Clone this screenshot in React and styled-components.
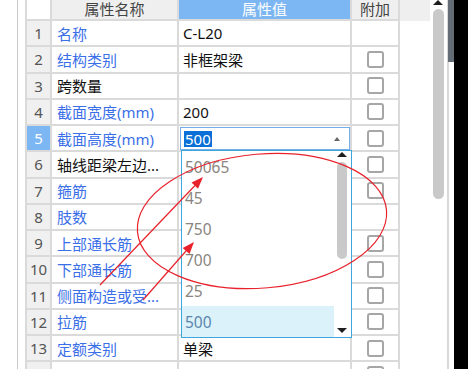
import React from "react";
import styled, { createGlobalStyle } from "styled-components";

const GlobalStyle = createGlobalStyle`
  html, body {
    margin: 0;
    padding: 0;
    background: #fff;
    overflow: hidden;
  }
  body {
    font-family: "Noto Sans", "Noto Sans CJK SC", sans-serif;
  }
`;

// colours
const LINE = "#dadada";
const HEAD_BLUE = "#7db7f3";
const NAME_BLUE = "#3b6fe8";

const Page = styled.div`
  position: relative;
  display: flex;
  width: 468px;
  height: 369px;
  overflow: hidden;
  background: #fff;
`;

const Gutter = styled.div`
  width: 17px;
  flex: none;
  border-right: 1px solid #c8c8c8;
`;

const Sheet = styled.div`
  flex: none;
  padding-left: 7px;
`;

const Grid = styled.div`
  display: grid;
  grid-template-columns: 27px 127px 173px 48px 30px;
  grid-template-rows: 21px;
  grid-auto-rows: 26.25px;
  font-size: 15px;
`;

const HeadCell = styled.div`
  box-sizing: border-box;
  display: flex;
  align-items: center;
  justify-content: center;
  background: ${(p) => (p.$blue ? HEAD_BLUE : p.$blank ? "#fff" : "#efefef")};
  color: ${(p) => (p.$blue ? "#fff" : "#444")};
  border-bottom: 2px solid ${LINE};
  border-right: ${(p) => (p.$last ? "none" : `2px solid ${LINE}`)};
  border-left: ${(p) => (p.$first ? `2px solid ${LINE}` : "none")};
  border-bottom-color: ${(p) => (p.$last ? "#efefef" : LINE)};
  line-height: 1;
`;

const NumCell = styled.div`
  box-sizing: border-box;
  display: flex;
  align-items: center;
  justify-content: center;
  background: ${(p) => (p.$active ? HEAD_BLUE : "#f0f0f0")};
  color: ${(p) => (p.$active ? "#fff" : "#555")};
  border-left: 2px solid ${LINE};
  border-right: 2px solid ${LINE};
  border-bottom: 2px solid ${LINE};
`;

const Cell = styled.div`
  box-sizing: border-box;
  display: flex;
  align-items: center;
  justify-content: ${(p) => (p.$center ? "center" : "flex-start")};
  padding-left: ${(p) => p.$pad || 0}px;
  color: ${(p) => (p.$blue ? NAME_BLUE : "#111")};
  border-right: 2px solid ${LINE};
  border-bottom: 2px solid ${LINE};
  white-space: nowrap;
  overflow: hidden;
`;

const Filler = styled.div``;

const Check = styled.span`
  box-sizing: border-box;
  width: 17px;
  height: 17px;
  border: 2px solid #a6a6a6;
  border-radius: 3px;
  background: #fff;
`;

const Combo = styled.div`
  box-sizing: border-box;
  align-self: stretch;
  flex: 1;
  display: flex;
  align-items: center;
  justify-content: space-between;
  margin: 1px 0 0 1px;
  padding: 0 9px 0 3px;
  border: 1px solid #74ade9;
  background: #fff;
`;

const Selected = styled.span`
  background: #0a6fd6;
  color: #fff;
  line-height: 16px;
  padding: 0 1px;
`;

const Caret = styled.span`
  width: 0;
  height: 0;
  border-left: ${(p) => p.$size}px solid transparent;
  border-right: ${(p) => p.$size}px solid transparent;
  border-bottom: ${(p) => (p.$down ? "none" : `${p.$tall}px solid ${p.$color}`)};
  border-top: ${(p) => (p.$down ? `${p.$tall}px solid ${p.$color}` : "none")};
`;

const Dropdown = styled.div`
  position: absolute;
  left: 181px;
  top: 150px;
  width: 171px;
  height: 188px;
  box-sizing: border-box;
  border: 1px solid #3ea6dc;
  background: #fff;
  display: flex;
`;

const ItemList = styled.div`
  width: 152px;
  display: flex;
  flex-direction: column;
`;

const Item = styled.div`
  height: 31px;
  display: flex;
  align-items: center;
  padding-left: 3px;
  font-size: 15.5px;
  color: ${(p) => (p.$hot ? "#5a86ad" : "#8a8580")};
  background: ${(p) => (p.$hot ? "#dcf2fa" : "transparent")};
`;

const ListScroll = styled.div`
  flex: 1;
  display: flex;
  flex-direction: column;
  align-items: center;
  padding: 1px 1px 4px 0;
`;

const Thumb = styled.div`
  width: ${(p) => p.$w}px;
  height: ${(p) => p.$h}px;
  margin-top: ${(p) => p.$top}px;
  border-radius: ${(p) => p.$w / 2}px;
  background: #c9c9c9;
`;

const Spacer = styled.div`
  flex: 1;
`;

const ScrollTrack = styled.div`
  width: 17px;
  flex: none;
  display: flex;
  flex-direction: column;
  align-items: flex-start;
  padding-left: 3px;
  box-sizing: border-box;
`;

const EdgeStrip = styled.div`
  width: 7px;
  flex: none;
  box-sizing: border-box;
  border-left: 2px solid #d8d8d8;
  position: relative;
`;

const EdgeDark = styled.div`
  margin-left: -1px;
  height: 62px;
  background: #646c76;
`;

const Blackout = styled.div`
  flex: 1;
  background: #000;
`;

const Marks = styled.svg`
  position: absolute;
  left: 0;
  top: 0;
  pointer-events: none;
`;

// last row is only partly in view, its number sits below the edge
const rows = [
  { name: "名称", value: "C-L20", blue: true, check: false },
  { name: "结构类别", value: "非框架梁", blue: true },
  { name: "跨数量", value: "", blue: false },
  { name: "截面宽度(mm)", value: "200", blue: true },
  { name: "截面高度(mm)", value: "500", blue: true, active: true },
  { name: "轴线距梁左边...", value: "", blue: false },
  { name: "箍筋", value: "", blue: true },
  { name: "肢数", value: "", blue: true, check: false },
  { name: "上部通长筋", value: "", blue: true },
  { name: "下部通长筋", value: "", blue: true },
  { name: "侧面构造或受...", value: "", blue: true },
  { name: "拉筋", value: "", blue: true },
  { name: "定额类别", value: "单梁", blue: true },
  { name: "", value: "", blue: true, hideNum: true },
];

const options = ["50065", "45", "750", "700", "25", "500"];

const App = () => {
  return (
    <>
      <GlobalStyle />
      <Page>
        <Gutter />
        <Sheet>
          <Grid>
            <HeadCell $blank $first />
            <HeadCell>属性名称</HeadCell>
            <HeadCell $blue>属性值</HeadCell>
            <HeadCell>附加</HeadCell>
            <HeadCell $last />
            {rows.map((r, i) => (
              <React.Fragment key={i}>
                <NumCell $active={r.active}>{r.hideNum ? "" : i + 1}</NumCell>
                <Cell $pad={5} $blue={r.blue}>
                  {r.name}
                </Cell>
                <Cell $pad={r.active ? 0 : 4}>
                  {r.active ? (
                    <Combo>
                      <Selected>{r.value}</Selected>
                      <Caret $size={3} $tall={4} $color="#666" />
                    </Combo>
                  ) : (
                    r.value
                  )}
                </Cell>
                <Cell $center>{r.check !== false && <Check />}</Cell>
                <Filler />
              </React.Fragment>
            ))}
          </Grid>
        </Sheet>
        <ScrollTrack>
          <Caret $size={5} $tall={5} $color="#1e1e1e" />
          <Thumb $w={11} $h={190} $top={4} />
        </ScrollTrack>
        <EdgeStrip>
          <EdgeDark />
        </EdgeStrip>
        <Blackout />

        <Dropdown>
          <ItemList>
            {options.map((o, i) => (
              <Item key={o} $hot={i === options.length - 1}>
                {o}
              </Item>
            ))}
          </ItemList>
          <ListScroll>
            <Caret $size={5} $tall={5} $color="#1e1e1e" />
            <Thumb $w={10} $h={97} $top={5} />
            <Spacer />
            <Caret $down $size={5} $tall={5} $color="#1e1e1e" />
          </ListScroll>
        </Dropdown>

        <Marks width="468" height="369" viewBox="0 0 468 369">
          <g fill="none" stroke="#e8212b" strokeWidth="1.2">
            <ellipse cx="262" cy="221" rx="125" ry="67" transform="rotate(-5 262 221)" />
            <line x1="100" y1="285" x2="195" y2="185.5" />
            <line x1="143" y1="300" x2="186.5" y2="250.5" />
          </g>
          <g fill="#e8212b">
            <polygon points="203,177 198,188.8 191.5,182.6" />
            <polygon points="194,242 189.5,254 182.7,248" />
          </g>
        </Marks>
      </Page>
    </>
  );
};

export default App;
